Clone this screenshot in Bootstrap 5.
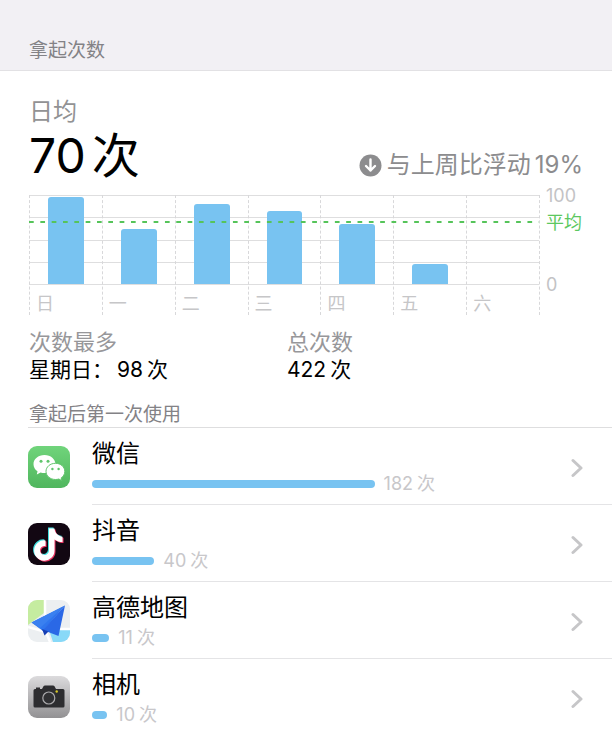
<!DOCTYPE html>
<html lang="zh-CN">
<head>
<meta charset="utf-8">
<meta name="viewport" content="width=device-width, initial-scale=1">
<title>拿起次数</title>
<link href="https://cdn.jsdelivr.net/npm/bootstrap@5.3.0/dist/css/bootstrap.min.css" rel="stylesheet">
<style>
  body { font-family: Inter, "Noto Sans CJK SC", sans-serif; color: #000; background: #fff; }
  .page-head { padding: 39px 29px 7px; background: #f2f0f4; border-bottom: 1px solid #e2e1e4; }
  .section-title { font-size: 19px; line-height: 24px; font-weight: 400; color: #838286; }
  .page-main { padding: 27px 0 0 28px; }
  .inset { padding-left: 1px; padding-right: 29px; }
  .unit-gap { margin-left: 4px; }
  .avg-label { font-size: 24px; line-height: 28px; color: #929294; }
  .avg-value { font-size: 48px; line-height: 60px; }
  .avg-value .unit-gap { margin-left: 6px; }
  .trend { font-size: 24px; line-height: 32px; color: #8c8c8e; margin-bottom: 5px; gap: 5px; }

  .chart { margin-top: 9px; }
  .plot { border-right: 1px dashed #d8d8da; }
  .day { flex: 1 1 0; border-left: 1px dashed #d8d8da; }
  .day-plot { height: 89px; }
  .day-bar { width: 50%; background: #78c3f1; border-radius: 3px 3px 0 0; }
  .day-name { font-size: 18px; line-height: 22px; padding: 9px 0 0 6px; color: #c6c6c8; }
  .grid-lines { height: 90px; }
  .grid-lines div { flex: 1 1 0; border-top: 1px solid #dededf; }
  .grid-lines div:last-child { border-bottom: 1px solid #dededf; }
  .avg-line { top: 26px; height: 2px;
    background: linear-gradient(90deg, #56c45a 38%, transparent 38%) 0 0 / calc(100% / 45) 2px repeat-x; }
  .axis { width: 43px; height: 111px; margin-top: -10px; padding-left: 6px; font-size: 18px; line-height: 22px; color: #c3c3c5; }
  .axis-avg { color: #5cc860; margin-top: 5px; }

  .stats { margin-top: 13px; font-size: 21px; line-height: 28px; }
  .stat-first { width: 258px; }
  .stat-name { font-size: 22px; color: #97979a; }
  .list-title { margin-top: 19px; padding-left: 1px; border-bottom: 1px solid #dededf; }

  .app-row { gap: 22px; color: #000; }
  .app-icon { width: 42px; height: 42px; }
  .app-body { border-bottom: 1px solid #e4e4e6; padding: 11px 29px 8px 0; }
  .app-row:last-child .app-body { border-bottom: 0; }
  .app-name { font-size: 24px; line-height: 30px; margin-bottom: 3px; }
  .app-usage { gap: 9px; font-size: 18px; line-height: 24px; color: #c8c7ca; }
  .usage-bar { height: 8px; background: #78c3f1; }
</style>
<script src="https://cdn.jsdelivr.net/npm/bootstrap@5.3.0/dist/js/bootstrap.bundle.min.js"></script>
</head>
<body>
<header class="page-head"><h1 class="section-title m-0">拿起次数</h1></header>

<main class="page-main">
  <section class="inset">
    <div class="avg-label">日均</div>
    <div class="d-flex justify-content-between align-items-end">
      <div class="avg-value">70<span class="unit-gap">次</span></div>
      <div class="trend d-flex align-items-center">
        <svg width="23" height="23" viewBox="0 0 23 23" aria-hidden="true"><circle cx="11.5" cy="11.5" r="11" fill="#8c8c8e"/><path d="M11.5 5.500v11M7 12l4.500 4.500L16 12" fill="none" stroke="#fff" stroke-width="2.400" stroke-linecap="round" stroke-linejoin="round"/></svg>
        <span>与上周比浮动<span class="unit-gap">19%</span></span>
      </div>
    </div>

    <div class="chart d-flex">
      <div class="plot position-relative flex-fill">
        <div class="grid-lines d-flex flex-column position-absolute top-0 w-100"><div></div><div></div><div></div><div></div></div>
        <div class="d-flex position-relative">
          <div class="day"><div class="day-plot d-flex align-items-end justify-content-center"><div class="day-bar" style="height:98%"></div></div><div class="day-name">日</div></div>
          <div class="day"><div class="day-plot d-flex align-items-end justify-content-center"><div class="day-bar" style="height:62%"></div></div><div class="day-name">一</div></div>
          <div class="day"><div class="day-plot d-flex align-items-end justify-content-center"><div class="day-bar" style="height:90%"></div></div><div class="day-name">二</div></div>
          <div class="day"><div class="day-plot d-flex align-items-end justify-content-center"><div class="day-bar" style="height:82%"></div></div><div class="day-name">三</div></div>
          <div class="day"><div class="day-plot d-flex align-items-end justify-content-center"><div class="day-bar" style="height:67%"></div></div><div class="day-name">四</div></div>
          <div class="day"><div class="day-plot d-flex align-items-end justify-content-center"><div class="day-bar" style="height:23%"></div></div><div class="day-name">五</div></div>
          <div class="day"><div class="day-plot"></div><div class="day-name">六</div></div>
        </div>
        <div class="avg-line position-absolute w-100"></div>
      </div>
      <div class="axis d-flex flex-column flex-shrink-0">
        <div>100</div><div class="axis-avg">平均</div><div class="mt-auto">0</div>
      </div>
    </div>

    <div class="stats d-flex">
      <div class="stat-first"><div class="stat-name">次数最多</div><div>星期日：<span class="unit-gap">98</span><span class="unit-gap">次</span></div></div>
      <div><div class="stat-name">总次数</div><div>422<span class="unit-gap">次</span></div></div>
    </div>
  </section>

  <section>
    <h2 class="section-title list-title mb-0">拿起后第一次使用</h2>
    <a href="#" class="app-row d-flex align-items-center text-decoration-none">
      <svg class="app-icon flex-shrink-0" viewBox="0 0 42 42" aria-hidden="true"><defs><linearGradient id="wx" x2="0" y2="1"><stop stop-color="#70d47b"/><stop offset="1" stop-color="#50b65e"/></linearGradient></defs><rect width="42" height="42" rx="9" fill="url(#wx)"/><path d="M16.500 9C10.200 9 5.500 13 5.500 18.200c0 2.900 1.500 5.400 4 7.100L8.800 28.500l3.800-2c1.200.4 2.600.6 4 .6 6.200 0 10.900-4 10.900-8.900S22.800 9 16.500 9z" fill="#fff"/><path d="M27.500 17.300c-5.400 0-9.500 3.600-9.500 8.100s4.100 8.100 9.500 8.100c1.200 0 2.300-.2 3.300-.5l3 1.600-.6-2.700c2.200-1.500 3.600-3.800 3.600-6.500 0-4.500-4-8.100-9.300-8.100z" fill="#fff" stroke="#60c56c"/><g fill="#60c56c"><circle cx="13" cy="15.200" r="1.500"/><circle cx="20" cy="15.200" r="1.500"/><circle cx="24.400" cy="23" r="1.200"/><circle cx="30.600" cy="23" r="1.200"/></g></svg>
      <div class="app-body flex-fill d-flex align-items-center">
        <div class="flex-fill"><div class="app-name">微信</div>
          <div class="app-usage d-flex align-items-center"><div class="usage-bar rounded-pill" style="width:59%"></div><span>182<span class="unit-gap">次</span></span></div></div>
        <svg width="12" height="20" viewBox="0 0 12 20" aria-hidden="true"><path d="M2 2.500l8 7.500-8 7.500" fill="none" stroke="#c6c6c8" stroke-width="3" stroke-linecap="round" stroke-linejoin="round"/></svg>
      </div>
    </a>
    <a href="#" class="app-row d-flex align-items-center text-decoration-none">
      <svg class="app-icon flex-shrink-0" viewBox="0 0 42 42" aria-hidden="true"><defs><path id="note" d="M21 5.500h5.500c.5 4.700 3.500 7.700 8 8.200v5.300c-3 0-5.800-.9-8-2.600v11.100a10.200 10.200 0 1 1-9-10.100v5.600a4.500 4.500 0 1 0 3.500 4.400z"/></defs><rect width="42" height="42" rx="9" fill="#120712"/><use href="#note" x="-1" y="-1" fill="#43dfe0"/><use href="#note" x="1" y="1" fill="#e93462"/><use href="#note" fill="#fff"/></svg>
      <div class="app-body flex-fill d-flex align-items-center">
        <div class="flex-fill"><div class="app-name">抖音</div>
          <div class="app-usage d-flex align-items-center"><div class="usage-bar rounded-pill" style="width:13%"></div><span>40<span class="unit-gap">次</span></span></div></div>
        <svg width="12" height="20" viewBox="0 0 12 20" aria-hidden="true"><path d="M2 2.500l8 7.500-8 7.500" fill="none" stroke="#c6c6c8" stroke-width="3" stroke-linecap="round" stroke-linejoin="round"/></svg>
      </div>
    </a>
    <a href="#" class="app-row d-flex align-items-center text-decoration-none">
      <svg class="app-icon flex-shrink-0" viewBox="0 0 42 42" aria-hidden="true"><defs><clipPath id="tile"><rect width="42" height="42" rx="9"/></clipPath></defs><g clip-path="url(#tile)"><path fill="#eceff1" d="M0 0h42v42H0z"/><path fill="#c5eca0" d="M0 0h16v13L0 25z"/><path fill="#88d9f8" d="M21 30h21v12H25z"/><path d="M17 0v16M0 27l18 5 4 10M20 29h22" fill="none" stroke="#fff" stroke-width="2.500"/></g><path fill="#2f76ee" d="M3.500 22.500L37 5.500 15 31z"/><path fill="#2a68e6" d="M37 5.500L30.500 36 15 30z"/><path fill="#3a80f0" d="M37 5.500L12 28 3.500 22.500z"/><path fill="#173fb4" d="M14 29l6.500 2.500-4 4z"/></svg>
      <div class="app-body flex-fill d-flex align-items-center">
        <div class="flex-fill"><div class="app-name">高德地图</div>
          <div class="app-usage d-flex align-items-center"><div class="usage-bar rounded-pill" style="width:3.600%"></div><span>11<span class="unit-gap">次</span></span></div></div>
        <svg width="12" height="20" viewBox="0 0 12 20" aria-hidden="true"><path d="M2 2.500l8 7.500-8 7.500" fill="none" stroke="#c6c6c8" stroke-width="3" stroke-linecap="round" stroke-linejoin="round"/></svg>
      </div>
    </a>
    <a href="#" class="app-row d-flex align-items-center text-decoration-none">
      <svg class="app-icon flex-shrink-0" viewBox="0 0 42 42" aria-hidden="true"><defs><linearGradient id="cam" x2="0" y2="1"><stop stop-color="#dcdbdd"/><stop offset="1" stop-color="#929193"/></linearGradient></defs><rect width="42" height="42" rx="9" fill="url(#cam)"/><path d="M7 13h1v-1.500h4V13h2l1.500-2.700q.5-.8 1.500-.8h8q1 0 1.500.8L28 13h7q1.500 0 1.500 1.500v15.500q0 1.500-1.500 1.500H7q-1.500 0-1.500-1.500V14.500Q5.500 13 7 13z" fill="#2d2d30"/><circle cx="20.800" cy="22" r="6" fill="#303033" stroke="#aaa9ac" stroke-width="1.200"/><circle cx="28.700" cy="15.500" r="1.200" fill="#d8c928"/></svg>
      <div class="app-body flex-fill d-flex align-items-center">
        <div class="flex-fill"><div class="app-name">相机</div>
          <div class="app-usage d-flex align-items-center"><div class="usage-bar rounded-pill" style="width:3.200%"></div><span>10<span class="unit-gap">次</span></span></div></div>
        <svg width="12" height="20" viewBox="0 0 12 20" aria-hidden="true"><path d="M2 2.500l8 7.500-8 7.500" fill="none" stroke="#c6c6c8" stroke-width="3" stroke-linecap="round" stroke-linejoin="round"/></svg>
      </div>
    </a>
  </section>
</main>
</body>
</html>
